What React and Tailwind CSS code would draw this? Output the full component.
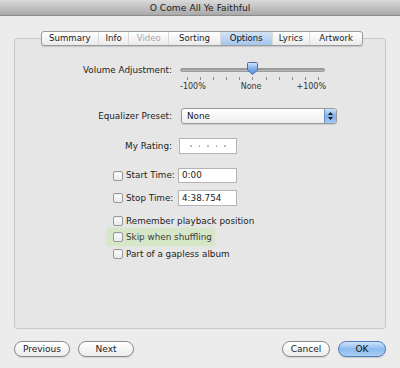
import React from 'react'

const tabs = [
  { label: 'Summary', w: 'w-[56px]' },
  { label: 'Info', w: 'w-[31px]' },
  { label: 'Video', w: 'w-[40px]', disabled: true },
  { label: 'Sorting', w: 'w-[52px]' },
  { label: 'Options', w: 'w-[52px]', active: true },
  { label: 'Lyrics', w: 'w-[38px]' },
  { label: 'Artwork', w: 'w-[53px]' },
]

function Checkbox() {
  return (
    <span className="block w-[10px] h-[10px] shrink-0 rounded-[2px] border border-[#9a9a9a] bg-gradient-to-b from-white to-[#e9e9e9] shadow-[inset_0_1px_1px_rgba(0,0,0,0.08)]" />
  )
}

function Thumb() {
  return (
    <svg width="11" height="13" viewBox="0 0 11 13">
      <defs>
        <linearGradient id="th" x1="0" y1="0" x2="0" y2="1">
          <stop offset="0" stopColor="#d4e6fb" />
          <stop offset="0.5" stopColor="#7fb1ec" />
          <stop offset="1" stopColor="#4d8fdf" />
        </linearGradient>
      </defs>
      <path d="M1.5 0.5 H9.5 Q10.5 0.5 10.5 1.5 V8 L5.5 12.5 L0.5 8 V1.5 Q0.5 0.5 1.5 0.5 Z" fill="url(#th)" stroke="#4a6f9e" strokeWidth="1" />
    </svg>
  )
}

function Pill({ children, className, primary }) {
  return (
    <button
      className={
        primary
          ? `${className} h-[16px] rounded-full border border-[#4f7dc0] bg-gradient-to-b from-[#d2e5fa] via-[#8dbbef] to-[#a9cdf5] text-[9px] leading-none text-[#111] shadow-[0_1px_1px_rgba(0,0,0,0.15)]`
          : `${className} h-[16px] rounded-full border border-[#8a8a8a] bg-gradient-to-b from-white to-[#ececec] text-[9px] leading-none text-[#222] shadow-[0_1px_1px_rgba(0,0,0,0.12)]`
      }
    >
      {children}
    </button>
  )
}

export default function App() {
  return (
    <div className="w-[400px] h-[368px] bg-[#ececec] font-['Lucida_Grande','DejaVu_Sans',sans-serif] text-[#1c1c1c] overflow-hidden whitespace-nowrap">
      {/* Title bar */}
      <div className="h-[16px] bg-gradient-to-b from-[#dadada] to-[#a9a9a9] border-b border-[#8c8c8c] flex items-center justify-center">
        <span className="text-[9.2px] leading-none text-[#222]">O Come All Ye Faithful</span>
      </div>

      <div className="px-[14px] pt-[15px]">
        {/* Segmented tabs */}
        <div className="relative z-10 ml-[27px] w-[322px] h-[15px] flex rounded-[3px] border border-[#9c9c9c] bg-gradient-to-b from-white to-[#ebebeb] shadow-[0_1px_1px_rgba(0,0,0,0.15)] overflow-hidden">
          {tabs.map((t, i) => (
            <div
              key={t.label}
              className={`${t.w} h-full flex items-center justify-center text-[8.6px] leading-none ${
                i > 0 ? 'border-l border-[#dadada]' : ''
              } ${t.active ? 'bg-gradient-to-b from-[#d3e3f5] to-[#a5c6ec] text-[#111]' : ''} ${
                t.disabled ? 'text-[#a8a8a8]' : ''
              }`}
            >
              {t.label}
            </div>
          ))}
        </div>

        {/* Panel */}
        <div className="-mt-[8px] h-[291px] rounded-[3px] border border-[#c8c8c8] bg-[#e6e6e6] pt-[25px] text-[8.8px]">
          {/* Volume */}
          <div className="flex items-center h-[12px]">
            <span className="w-[157px] text-right leading-none">Volume Adjustment:</span>
            <div className="relative ml-[8px] w-[145px] h-[12px] flex items-center">
              <div className="w-full h-[4px] rounded-full bg-gradient-to-b from-[#8f8f8f] to-[#c4c4c4] border border-[#9a9a9a]" />
              <div className="absolute left-[67px] top-[-2px]">
                <Thumb />
              </div>
            </div>
          </div>
          <div className="ml-[172px] mt-[1px] w-[132px] h-[3px] flex justify-between">
            {Array.from({ length: 11 }).map((_, i) => (
              <span key={i} className="block w-px h-full bg-[#8a8a8a]" />
            ))}
          </div>
          <div className="ml-[165px] mt-[2px] w-[146px] h-[10px] flex justify-between text-[8px] leading-[10px] text-[#333]">
            <span>-100%</span>
            <span>None</span>
            <span>+100%</span>
          </div>

          {/* Equalizer */}
          <div className="mt-[16px] flex items-center h-[16px]">
            <span className="w-[157px] text-right leading-none">Equalizer Preset:</span>
            <div className="ml-[9px] w-[156px] h-[16px] flex rounded-[3px] border border-[#9a9a9a] bg-gradient-to-b from-white to-[#efefef] shadow-[0_1px_1px_rgba(0,0,0,0.12)] overflow-hidden">
              <span className="flex-1 flex items-center pl-[5px] leading-none">None</span>
              <span className="w-[12px] h-full bg-gradient-to-b from-[#cfe2f8] via-[#7eb0ea] to-[#a3c8f2] flex flex-col items-center justify-center gap-[2px] border-l border-[#6b8fbf]">
                <svg width="5" height="3" viewBox="0 0 5 3"><path d="M0 3 L2.5 0 L5 3 Z" fill="#1a1a1a" /></svg>
                <svg width="5" height="3" viewBox="0 0 5 3"><path d="M0 0 L2.5 3 L5 0 Z" fill="#1a1a1a" /></svg>
              </span>
            </div>
          </div>

          {/* Rating */}
          <div className="mt-[14px] flex items-center h-[16px]">
            <span className="w-[157px] text-right leading-none">My Rating:</span>
            <div className="ml-[7px] w-[58px] h-[16px] bg-white border border-[#b4b4b4] flex items-center justify-center gap-[7px]">
              {Array.from({ length: 5 }).map((_, i) => (
                <span key={i} className="block w-[1.5px] h-[1.5px] rounded-full bg-[#a0a0a0]" />
              ))}
            </div>
          </div>

          {/* Start time */}
          <div className="mt-[14px] ml-[98px] flex items-center h-[15px]">
            <Checkbox />
            <span className="w-[55px] pl-[3px] leading-none">Start Time:</span>
            <div className="w-[59px] h-[15px] bg-white border border-[#b4b4b4] flex items-center pl-[3px] leading-none">0:00</div>
          </div>

          {/* Stop time */}
          <div className="mt-[7px] ml-[98px] flex items-center h-[16px]">
            <Checkbox />
            <span className="w-[55px] pl-[3px] leading-none">Stop Time:</span>
            <div className="w-[59px] h-[16px] bg-white border border-[#b4b4b4] flex items-center pl-[3px] leading-none">4:38.754</div>
          </div>

          {/* Options */}
          <div className="mt-[8px] ml-[98px] flex items-center h-[14px]">
            <Checkbox />
            <span className="pl-[3px] leading-none">Remember playback position</span>
          </div>
          <div className="ml-[92px] w-[108px] h-[18px] pl-[6px] flex items-center rounded-[3px] bg-[#d6e6c9] shadow-[0_0_3px_#d6e6c9]">
            <Checkbox />
            <span className="pl-[3px] leading-none text-[#3b3b3b]">Skip when shuffling</span>
          </div>
          <div className="mt-[1px] ml-[98px] flex items-center h-[14px]">
            <Checkbox />
            <span className="pl-[3px] leading-none">Part of a gapless album</span>
          </div>
        </div>
      </div>

      {/* Buttons */}
      <div className="mt-[12px] px-[14px] flex items-center">
        <Pill className="w-[56px]">Previous</Pill>
        <Pill className="w-[56px] ml-[8px]">Next</Pill>
        <Pill className="w-[48px] ml-auto">Cancel</Pill>
        <Pill className="w-[48px] ml-[8px]" primary>OK</Pill>
      </div>
    </div>
  )
}
